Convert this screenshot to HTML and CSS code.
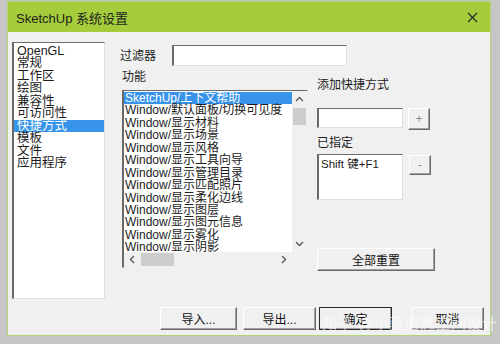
FILE: index.html
```html
<!DOCTYPE html>
<html lang="zh">
<head>
<meta charset="utf-8">
<title>SketchUp 系统设置</title>
<link rel="stylesheet" href="styles.css">
</head>
<body>
<div class="win">
  <div class="titlebar">
    <span class="title">SketchUp 系统设置</span>
    <svg class="close" width="11" height="11" viewBox="0 0 11 11"><path d="M1 1L10 10M10 1L1 10" stroke="#2b2b2b" stroke-width="1.2" fill="none"/></svg>
  </div>
  <div class="body">
    <div class="toprow">
      <div class="catlist sunken">
        <div class="cat">OpenGL</div>
        <div class="cat">常规</div>
        <div class="cat">工作区</div>
        <div class="cat">绘图</div>
        <div class="cat">兼容性</div>
        <div class="cat">可访问性</div>
        <div class="cat sel">快捷方式</div>
        <div class="cat">模板</div>
        <div class="cat">文件</div>
        <div class="cat">应用程序</div>
      </div>
      <div class="main">
        <div class="filterrow">
          <span class="lbl filterlbl">过滤器</span>
          <div class="input filterinput sunken"></div>
        </div>
        <div class="lower">
          <div class="funccol">
            <div class="lbl funclbl">功能</div>
            <div class="flist sunken">
              <div class="items">
                <div class="item sel">SketchUp/上下文帮助</div>
                <div class="item">Window/默认面板/切换可见度</div>
                <div class="item">Window/显示材料</div>
                <div class="item">Window/显示场景</div>
                <div class="item">Window/显示风格</div>
                <div class="item">Window/显示工具向导</div>
                <div class="item">Window/显示管理目录</div>
                <div class="item">Window/显示匹配照片</div>
                <div class="item">Window/显示柔化边线</div>
                <div class="item">Window/显示图层</div>
                <div class="item">Window/显示图元信息</div>
                <div class="item">Window/显示雾化</div>
                <div class="item">Window/显示阴影</div>
              </div>
              <div class="vscroll">
                <div class="sarrow"><svg width="9" height="6" viewBox="0 0 9 6"><path d="M1 5L4.5 1.5L8 5" stroke="#555" stroke-width="1.3" fill="none"/></svg></div>
                <div class="vthumb"></div>
                <div class="sfill"></div>
                <div class="sarrow"><svg width="9" height="6" viewBox="0 0 9 6"><path d="M1 1L4.5 4.5L8 1" stroke="#555" stroke-width="1.3" fill="none"/></svg></div>
              </div>
              <div class="hscroll">
                <div class="sarrow"><svg width="6" height="9" viewBox="0 0 6 9"><path d="M5 1L1.5 4.5L5 8" stroke="#555" stroke-width="1.3" fill="none"/></svg></div>
                <div class="hthumb"></div>
                <div class="sfill"></div>
                <div class="sarrow"><svg width="6" height="9" viewBox="0 0 6 9"><path d="M1 1L4.5 4.5L1 8" stroke="#555" stroke-width="1.3" fill="none"/></svg></div>
              </div>
              <div class="corner"></div>
            </div>
          </div>
          <div class="rightcol">
            <div class="lbl addlbl">添加快捷方式</div>
            <div class="addrow">
              <div class="input keyinput sunken"></div>
              <div class="btn small">+</div>
            </div>
            <div class="lbl asglbl">已指定</div>
            <div class="asgrow">
              <div class="asgbox sunken">Shift 键+F1</div>
              <div class="btn small minus">-</div>
            </div>
            <div class="btn resetbtn">全部重置</div>
          </div>
        </div>
      </div>
    </div>
    <div class="btnrow">
      <div class="btn b-import">导入...</div>
      <div class="btn b-export">导出...</div>
      <div class="btn b-ok">确定</div>
      <div class="btn b-cancel">取消</div>
    </div>
  </div>
  <div class="watermark">知乎 @小莫信息空间设计</div>
</div>
</body>
</html>
```
FILE: styles.css
```css
* { box-sizing: border-box; }
html, body { margin: 0; padding: 0; }
body {
  width: 500px;
  height: 344px;
  overflow: hidden;
  background: #c6c6c6;
  font-family: "Liberation Sans", "Noto Sans CJK SC", sans-serif;
  font-size: 12px;
  color: #1c1c1c;
}
.win {
  position: relative;
  margin: 1px 0 0 7px;
  width: 484px;
  height: 335px;
  border: 1px solid #b3d37a;
  background: #f0f0f0;
  display: flex;
  flex-direction: column;
}
.titlebar {
  height: 30px;
  background: #a5cd3b;
  display: flex;
  align-items: center;
  justify-content: space-between;
  padding: 0 12px 0 8px;
}
.title { font-size: 13px; color: #1e1e1e; }
.close { display: block; }
.body { flex: 1; display: flex; flex-direction: column; }
.toprow { display: flex; align-items: flex-start; }
.sunken {
  background: #fff;
  border-top: 1px solid #6a6a6a;
  border-left: 2px solid #6a6a6a;
  border-right: 1px solid #dedede;
  border-bottom: 1px solid #dedede;
}
.catlist {
  margin: 10px 0 0 4px;
  width: 93px;
  height: 257px;
  padding-top: 2px;
  font-size: 12.5px;
}
.cat { line-height: 12.45px; height: 12.45px; padding-left: 3px; white-space: nowrap; }
.cat.sel { background: #3794ea; color: #fff; }
.main { margin-left: 15px; display: flex; flex-direction: column; }
.filterrow { margin-top: 13px; display: flex; align-items: center; }
.lbl { line-height: 14px; white-space: nowrap; }
.filterlbl { width: 52px; }
.input { height: 21px; }
.filterinput { width: 175px; }
.lower { display: flex; align-items: flex-start; }
.funccol { margin-left: 2px; display: flex; flex-direction: column; }
.funclbl { margin-top: 4px; height: 14px; }
.flist {
  margin-top: 6px;
  width: 186px;
  height: 178px;
  display: grid;
  grid-template-columns: 1fr 15px;
  grid-template-rows: 1fr 15px;
  border-right: 1px solid #f0f0f0;
  border-bottom: 1px solid #f0f0f0;
}
.items { overflow: hidden; padding-top: 1px; }
.item { line-height: 12.45px; height: 12.45px; padding-left: 1px; white-space: nowrap; }
.item.sel { background: #3794ea; color: #fff; }
.vscroll { background: #f0f0f0; display: flex; flex-direction: column; }
.hscroll { background: #f0f0f0; display: flex; flex-direction: row; }
.corner { background: #f0f0f0; }
.sarrow { flex: 0 0 16px; display: flex; align-items: center; justify-content: center; }
.sarrow svg { display: block; }
.sfill { flex: 1; }
.vthumb { flex: 0 0 17px; margin: 1px 1px 0 1px; background: #cdcdcd; }
.hthumb { flex: 0 0 33px; margin: 1px 0 1px 1px; background: #cdcdcd; }
.rightcol { margin-left: 9px; display: flex; flex-direction: column; }
.addlbl { margin-top: 12px; }
.addrow { margin-top: 16px; display: flex; align-items: flex-start; }
.keyinput { width: 86px; height: 20px; }
.btn {
  background: #f0f0f0;
  border-top: 1px solid #fff;
  border-left: 1px solid #fff;
  border-right: 1px solid #6a6a6a;
  border-bottom: 1px solid #6a6a6a;
  box-shadow: inset -1px -1px 0 #a0a0a0;
  display: flex;
  align-items: center;
  justify-content: center;
  white-space: nowrap;
  color: #111;
}
.small { width: 22px; height: 22px; margin-left: 5px; color: #8a8a8a; font-size: 12px; }
.asglbl { margin-top: 6px; }
.asgrow { margin-top: 4px; display: flex; align-items: flex-start; }
.asgbox { width: 86px; height: 46px; padding: 2px 0 0 2px; font-size: 11.5px; line-height: 14px; }
.minus { height: 20px; margin-top: 1px; margin-left: 6px; }
.resetbtn { margin-top: 48px; width: 118px; height: 23px; }
.btnrow { margin-top: 8px; display: flex; align-items: flex-start; padding-left: 152px; }
.btnrow .btn { height: 23px; width: 73px; }
.b-import { width: 77px !important; }
.b-export { margin-left: 6px; }
.b-ok { margin-left: 3px; outline: 1px solid #2a2a2a; outline-offset: -1px; }
.b-cancel { margin-left: 19px; }
.watermark {
  position: absolute;
  left: 314px;
  top: 310px;
  font-size: 15px;
  color: rgba(255,255,255,0.65);
  white-space: nowrap;
  letter-spacing: 0.5px;
}
```
